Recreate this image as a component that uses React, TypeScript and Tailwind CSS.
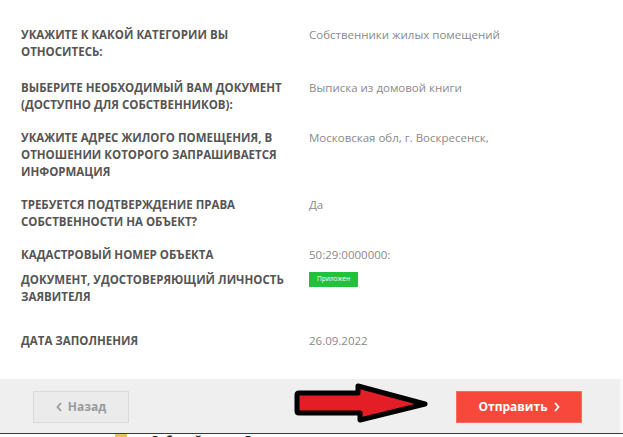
import React from "react";

function Label({ children }: { children: React.ReactNode }) {
  return (
    <div className="w-[288px] shrink-0 text-[11.5px] font-bold uppercase leading-[17px] text-[#555] whitespace-nowrap">
      {children}
    </div>
  );
}

function Value({ children }: { children: React.ReactNode }) {
  return <div className="text-[11.5px] leading-[17px] text-[#8a8a8a] whitespace-nowrap">{children}</div>;
}

export default function App() {
  return (
    <div
      className="relative w-[623px] h-[437px] overflow-hidden bg-white flex flex-col"
      style={{ fontFamily: '"Open Sans", "Liberation Sans", sans-serif' }}
    >
      <div className="flex-1 pl-[21px] pt-[26px]">
        <div className="flex mb-[19px]">
          <Label>
            Укажите к какой категории вы
            <br />
            относитесь:
          </Label>
          <Value>Собственники жилых помещений</Value>
        </div>
        <div className="flex mb-[16px]">
          <Label>
            Выберите необходимый вам документ
            <br />
            (доступно для собственников):
          </Label>
          <Value>Выписка из домовой книги</Value>
        </div>
        <div className="flex mb-[16px]">
          <Label>
            Укажите адрес жилого помещения, в
            <br />
            отношении которого запрашивается
            <br />
            информация
          </Label>
          <Value>Московская обл, г. Воскресенск,</Value>
        </div>
        <div className="flex mb-[16px]">
          <Label>
            Требуется подтверждение права
            <br />
            собственности на объект?
          </Label>
          <Value>Да</Value>
        </div>
        <div className="flex mb-[8px]">
          <Label>Кадастровый номер объекта</Label>
          <Value>50:29:0000000:</Value>
        </div>
        <div className="flex mb-[27px]">
          <Label>
            Документ, удостоверяющий личность
            <br />
            заявителя
          </Label>
          <div className="pt-[1px]">
            <span className="flex h-[15px] w-[49px] items-center justify-center bg-[#1fc23a] text-[6.5px] leading-none text-white">
              Приложен
            </span>
          </div>
        </div>
        <div className="flex">
          <Label>Дата заполнения</Label>
          <Value>26.09.2022</Value>
        </div>
      </div>

      <div className="relative h-[54px] shrink-0 bg-[#efefef] flex items-start justify-between pl-[33px] pr-[38px] pt-[12px] border-r-[3px] border-[#f8f8f8]">
        <button className="flex h-[32px] w-[96px] items-center justify-center gap-[6px] border border-[#dadada] bg-[#ebebeb] text-[12px] font-bold text-[#9a9a9a]">
          <svg width="6" height="10" viewBox="0 0 6 10" fill="none">
            <path d="M5 1 L1.5 5 L5 9" stroke="#9a9a9a" strokeWidth="1.8" />
          </svg>
          Назад
        </button>
        <button className="flex h-[32px] w-[126px] items-center justify-center gap-[6px] border border-[#ff6b60] bg-[#f8483c] text-[12px] font-bold text-white">
          Отправить
          <svg width="6" height="10" viewBox="0 0 6 10" fill="none">
            <path d="M1 1 L4.5 5 L1 9" stroke="#ffffff" strokeWidth="1.8" />
          </svg>
        </button>
        <svg
          className="absolute left-[294px] top-[3px]"
          width="138"
          height="42"
          viewBox="0 0 138 42"
        >
          <path
            d="M5 11 L64 11 L64 4 L131 22 L66 38 L66 31 L5 31 Q3 31 3 29 L3 13 Q3 11 5 11 Z"
            fill="#e31e26"
            stroke="#000"
            strokeWidth="5"
            strokeLinejoin="round"
          />
        </svg>
      </div>

      <div className="h-[4px] shrink-0 border-t border-[#3a3a3a] bg-white overflow-hidden relative">
        <div className="absolute left-[115px] top-[0px] h-[4px] w-[12px] bg-[#e8c25a]" />
        <div className="absolute left-[152px] top-[0px] text-[11px] font-bold leading-none text-[#222] whitespace-nowrap">
          Рабочий стол » Документы
        </div>
      </div>
    </div>
  );
}
